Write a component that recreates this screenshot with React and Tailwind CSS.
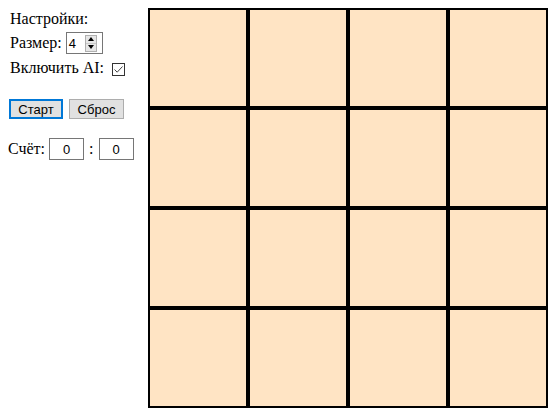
import React from "react";

const serif = { fontFamily: '"Liberation Serif", "Times New Roman", serif' };

function Cell() {
  return <div className="w-[100px] h-[100px] border-2 border-black bg-[#ffe4c4]" />;
}

export default function App() {
  const cells = Array.from({ length: 16 });
  return (
    <div className="flex w-[549px] h-[409px] bg-white text-black" style={serif}>
      <div className="w-[148px] shrink-0 pl-[8px] pt-[10px] flex flex-col">
        <div className="pl-[2px] flex flex-col">
          <div className="text-[16px] leading-[18px] h-[18px]">Настройки:</div>
          <div className="mt-[4px] h-[22px] flex items-baseline">
            <span className="text-[16px] leading-[18px]">Размер:</span>
            <div className="ml-[4px] w-[37px] h-[22px] border border-[#767676] bg-white flex items-center justify-between pl-[2px] pr-[5px] font-['Liberation_Sans',Arial,sans-serif] text-[13px] leading-[15px]">
              <span>4</span>
              <div className="w-[12px] h-[17px] flex flex-col border border-[#b0b0b0]">
                <div className="flex-1 bg-[#e6e6e6] flex items-center justify-center border-b border-[#c8c8c8]">
                  <svg width="6" height="4" viewBox="0 0 6 4"><path d="M0 4 L3 0 L6 4 Z" fill="#000" /></svg>
                </div>
                <div className="flex-1 bg-[#e6e6e6] flex items-center justify-center">
                  <svg width="6" height="4" viewBox="0 0 6 4"><path d="M0 0 L3 4 L6 0 Z" fill="#000" /></svg>
                </div>
              </div>
            </div>
          </div>
          <div className="mt-[5px] h-[18px] flex items-start">
            <span className="text-[16px] leading-[18px]">Включить AI:</span>
            <div className="ml-[8px] mt-[4px] w-[13px] h-[13px] border border-[#333] bg-white flex items-center justify-center">
              <svg width="11" height="11" viewBox="0 0 11 11">
                <path d="M1.5 5.5 L4.2 8.2 L9.5 2.5" fill="none" stroke="#444" strokeWidth="1" />
              </svg>
            </div>
          </div>
        </div>
        <div className="mt-[22px] pl-[1px] flex gap-[6px] font-['Liberation_Sans',Arial,sans-serif] text-[13px] leading-[15px]">
          <div className="w-[54px] h-[20px] border-2 border-[#0078d7] bg-[#e1e1e1] flex items-center justify-center">Старт</div>
          <div className="w-[55px] h-[20px] border border-[#adadad] bg-[#e1e1e1] flex items-center justify-center">Сброс</div>
        </div>
        <div className="mt-[19px] h-[22px] flex items-baseline">
          <span className="text-[16px] leading-[18px]">Счёт:</span>
          <div className="ml-[4px] w-[35px] h-[22px] border border-[#767676] flex items-center justify-center font-['Liberation_Sans',Arial,sans-serif] text-[13px] leading-[15px]">0</div>
          <span className="mx-[5px] text-[16px] leading-[18px]">:</span>
          <div className="w-[35px] h-[22px] border border-[#767676] flex items-center justify-center font-['Liberation_Sans',Arial,sans-serif] text-[13px] leading-[15px]">0</div>
        </div>
      </div>
      <div className="mt-[8px] w-[400px] h-[400px] grid grid-cols-4">
        {cells.map((_, i) => (
          <Cell key={i} />
        ))}
      </div>
    </div>
  );
}
